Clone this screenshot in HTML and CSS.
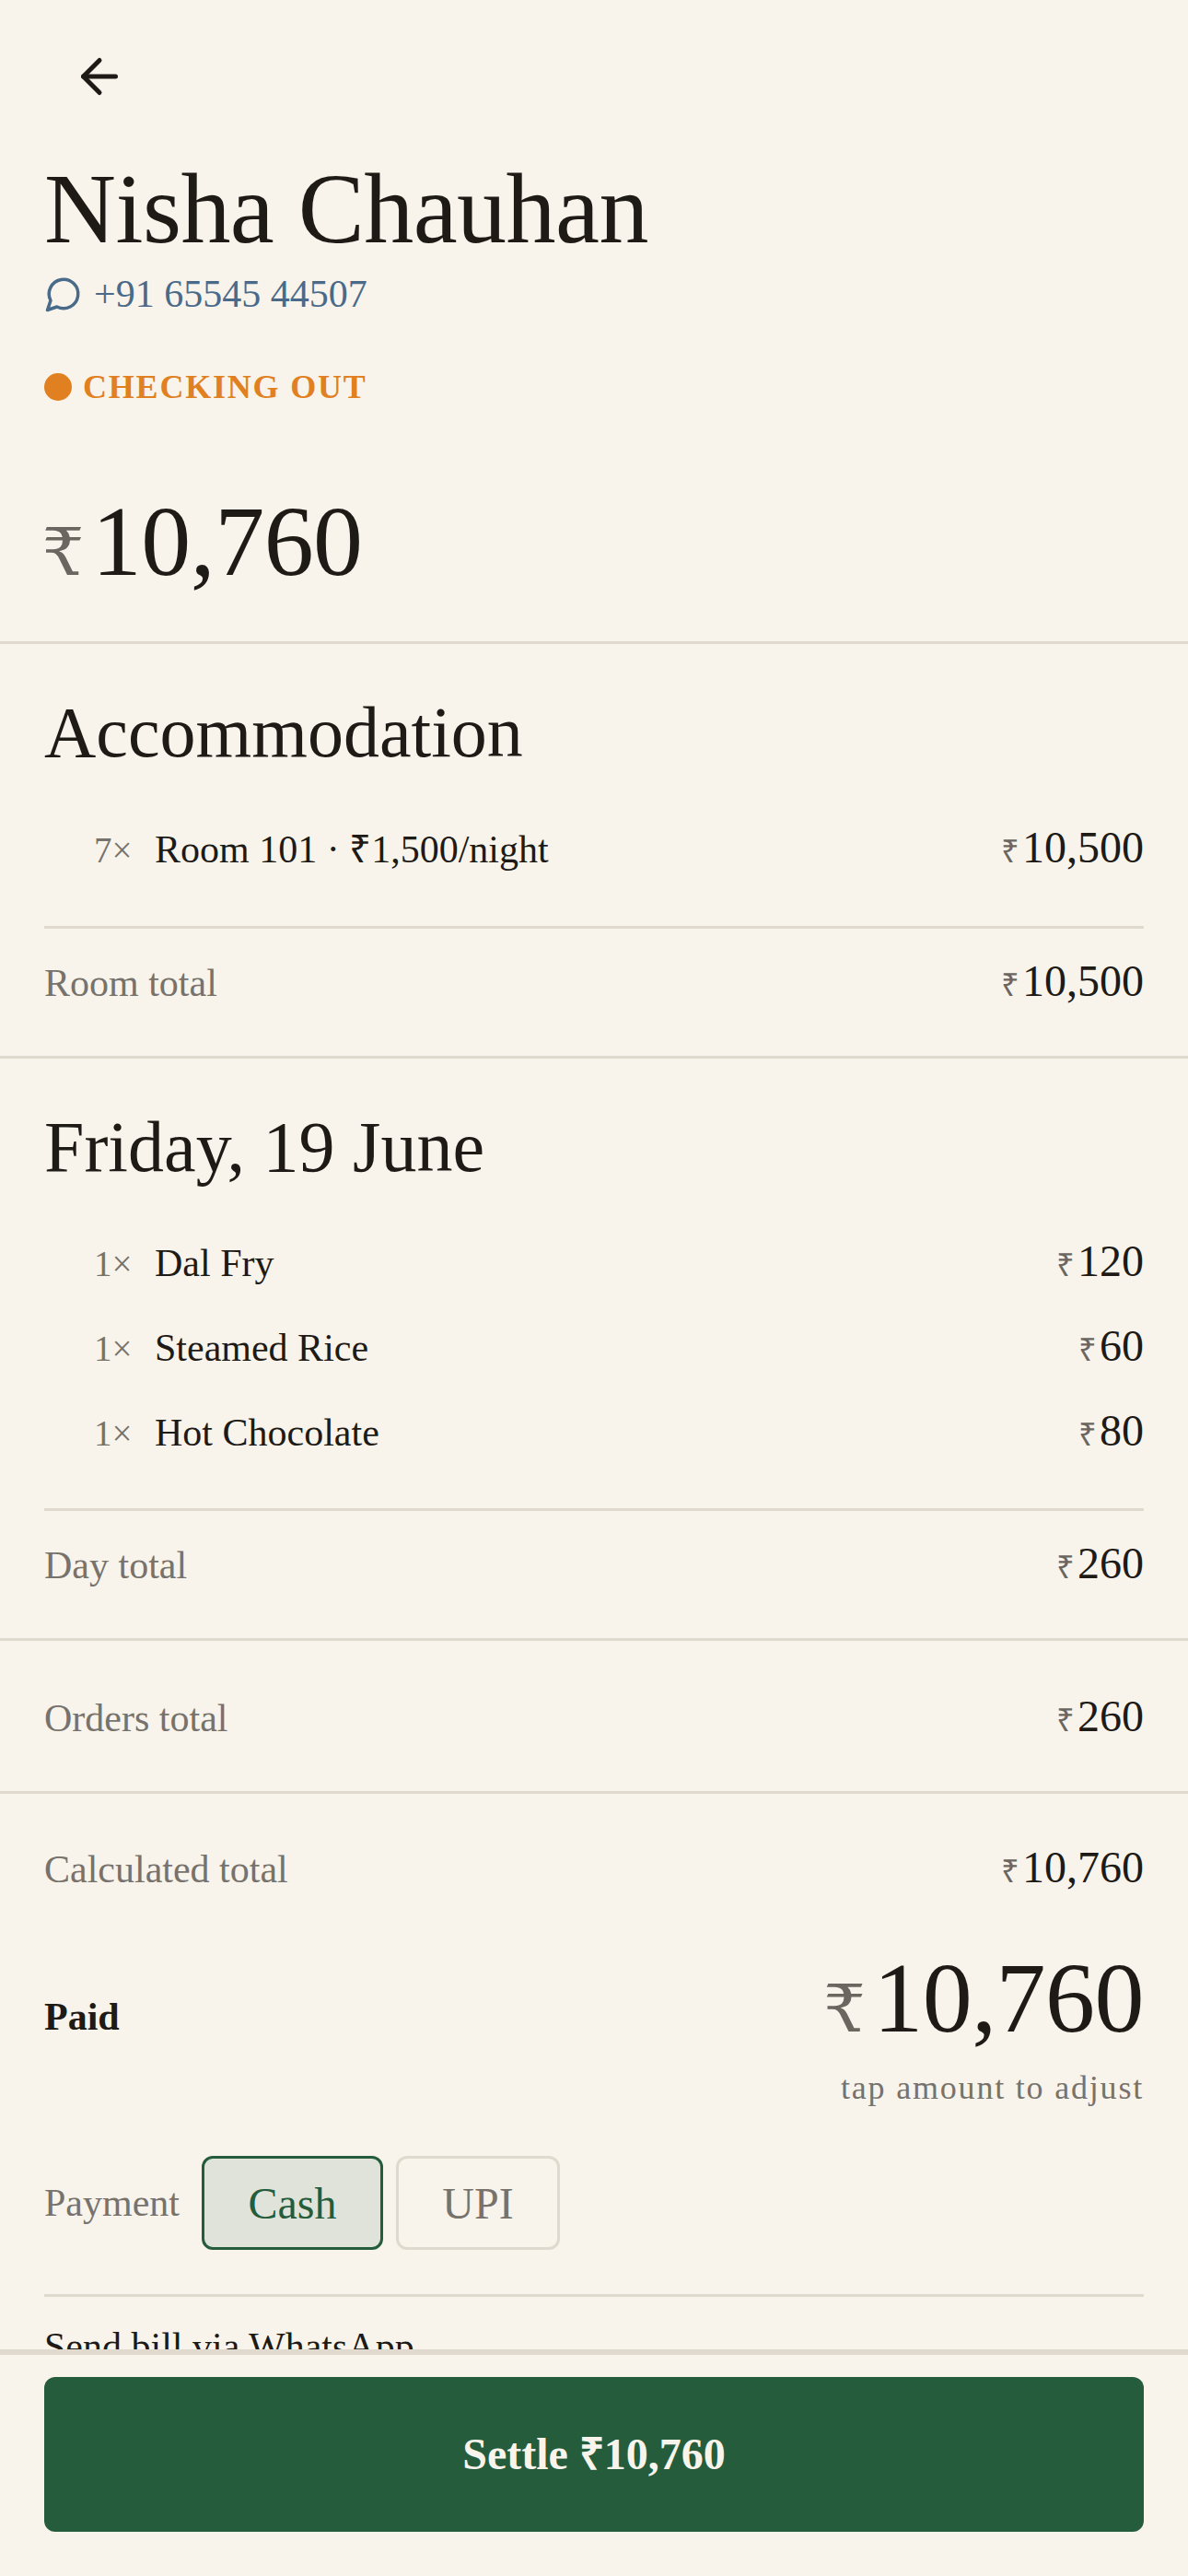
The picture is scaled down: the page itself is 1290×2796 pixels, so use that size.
FILE: index.html
```html
<!DOCTYPE html>
<html lang="en">
<head>
  <meta charset="UTF-8" />
  <meta name="viewport" content="width=device-width, initial-scale=1.0" />
  <title>Nisha Chauhan</title>
  <link rel="stylesheet" href="styles.css">
</head>
<body>
  <div class="screen">
    <div class="scroll">
      <!-- Guest header -->
      <header class="guest">
        <button class="back" aria-label="Back">
          <svg width="60" height="60" viewBox="0 0 24 24" fill="none" stroke="currentColor" stroke-width="2" stroke-linecap="round" stroke-linejoin="round">
            <path d="M19 12H5" />
            <path d="M12 19l-7-7 7-7" />
          </svg>
        </button>
        <h1 class="guest-name">Nisha Chauhan</h1>
        <a class="phone">
          <svg width="42" height="42" viewBox="0 0 24 24" fill="none" stroke="currentColor" stroke-width="2" stroke-linecap="round" stroke-linejoin="round">
            <path d="M7.9 20A9 9 0 1 0 4 16.1L2 22Z" />
          </svg>
          <span>+91 65545 44507</span>
        </a>
        <div class="status"><span class="dot"></span>CHECKING OUT</div>
        <div class="grand"><span class="rs">₹</span>10,760</div>
      </header>

      <!-- Room charges -->
      <section class="block">
        <h2>Accommodation</h2>
        <div class="item">
          <span class="qty">7×</span>
          <span class="item-name">Room 101 · ₹1,500/night</span>
          <span class="amt"><span class="rs">₹</span>10,500</span>
        </div>
        <div class="subtotal">
          <span class="label">Room total</span>
          <span class="amt"><span class="rs">₹</span>10,500</span>
        </div>
      </section>

      <!-- Orders by day -->
      <section class="block">
        <h2>Friday, 19 June</h2>
        <div class="item">
          <span class="qty">1×</span>
          <span class="item-name">Dal Fry</span>
          <span class="amt"><span class="rs">₹</span>120</span>
        </div>
        <div class="item">
          <span class="qty">1×</span>
          <span class="item-name">Steamed Rice</span>
          <span class="amt"><span class="rs">₹</span>60</span>
        </div>
        <div class="item">
          <span class="qty">1×</span>
          <span class="item-name">Hot Chocolate</span>
          <span class="amt"><span class="rs">₹</span>80</span>
        </div>
        <div class="subtotal">
          <span class="label">Day total</span>
          <span class="amt"><span class="rs">₹</span>260</span>
        </div>
      </section>

      <section class="orders">
        <span class="label">Orders total</span>
        <span class="amt"><span class="rs">₹</span>260</span>
      </section>

      <!-- Settlement -->
      <section class="settle">
        <div class="calc">
          <span class="label">Calculated total</span>
          <span class="amt"><span class="rs">₹</span>10,760</span>
        </div>
        <div class="paid">
          <span class="paid-label">Paid</span>
          <div class="paid-right">
            <div class="paid-amt"><span class="rs">₹</span>10,760</div>
            <div class="hint">tap amount to adjust</div>
          </div>
        </div>
        <div class="payment">
          <span class="label">Payment</span>
          <button class="pay-btn active">Cash</button>
          <button class="pay-btn">UPI</button>
        </div>
        <div class="send">Send bill via WhatsApp</div>
      </section>
    </div>

    <footer class="footer">
      <button class="settle-btn">Settle ₹10,760</button>
    </footer>
  </div>
</body>
</html>
```

FILE: styles.css
```css
/* General styles */
* {
  box-sizing: border-box;
}
html,
body {
  margin: 0;
  height: 100%;
  overflow: hidden;
}
body {
  font-family: "Liberation Serif", serif;
  background-color: #f8f4ec;
  color: #1e1a15;
}
button {
  font-family: inherit;
  cursor: pointer;
}
.screen {
  display: flex;
  flex-direction: column;
  height: 100vh;
}
.scroll {
  flex: 1;
  min-height: 0;
  overflow: hidden;
}
.rs {
  color: #6b665f;
  font-size: 0.72em;
  margin-right: 3px;
}
.label {
  font-size: 42px;
  color: #77726b;
}
.amt {
  font-size: 48px;
}
/* Guest header */
.guest {
  padding: 53px 48px 44px;
  border-bottom: 3px solid #e0d9ce;
}
.back {
  display: block;
  width: 60px;
  height: 60px;
  margin-left: 30px;
  padding: 0;
  border: none;
  background: none;
  color: #1e1a15;
}
.guest-name {
  margin: 55px 0 0;
  font-size: 108px;
  font-weight: 400;
  line-height: 1.1;
  letter-spacing: -0.005em;
}
.phone {
  display: flex;
  align-items: center;
  gap: 12px;
  margin-top: 8px;
  font-size: 42px;
  color: #4a6a8a;
}
.status {
  display: flex;
  align-items: center;
  gap: 12px;
  margin-top: 56px;
  font-size: 36px;
  font-weight: 700;
  letter-spacing: 0.05em;
  color: #e08020;
}
.dot {
  width: 30px;
  height: 30px;
  border-radius: 50%;
  background-color: #e08020;
}
.grand {
  margin-top: 82px;
  font-size: 108px;
  line-height: 1.2;
  letter-spacing: -0.005em;
}
.grand .rs,
.paid-amt .rs {
  font-family: "DejaVu Serif", serif;
  font-size: 0.66em;
  margin-left: -2px;
  margin-right: 9px;
}
/* Bill sections */
.block {
  padding: 49px 48px 0;
  border-bottom: 3px solid #e0d9ce;
}
.block h2 {
  margin: 0 0 31px;
  font-size: 78px;
  font-weight: 400;
  line-height: 1.2;
}
.item {
  display: flex;
  align-items: baseline;
  padding: 18.5px 0 18.5px 54px;
}
.qty {
  width: 66px;
  font-size: 39px;
  color: #77726b;
}
.item-name {
  flex: 1;
  font-size: 42px;
}
.subtotal {
  display: flex;
  justify-content: space-between;
  align-items: baseline;
  margin-top: 38px;
  padding: 29px 0 54px;
  border-top: 3px solid #e0d9ce;
}
.orders {
  display: flex;
  justify-content: space-between;
  align-items: baseline;
  padding: 54px 48px;
  border-bottom: 3px solid #e0d9ce;
}
/* Settlement */
.settle {
  padding: 52px 48px 0;
}
.calc {
  display: flex;
  justify-content: space-between;
  align-items: baseline;
}
.paid {
  display: flex;
  justify-content: space-between;
  margin-top: 50px;
}
.paid-label {
  margin-top: 61px;
  font-size: 42px;
  font-weight: 700;
}
.paid-right {
  text-align: right;
}
.paid-amt {
  font-size: 108px;
  line-height: 1.2;
  letter-spacing: -0.005em;
}
.hint {
  margin-top: 12px;
  font-size: 36px;
  letter-spacing: 0.05em;
  color: #77726b;
}
.payment {
  display: flex;
  align-items: center;
  gap: 14px;
  margin-top: 53px;
  padding-bottom: 48px;
  border-bottom: 3px solid #e0d9ce;
}
.payment .label {
  margin-right: 10px;
}
.pay-btn {
  width: 178px;
  height: 102px;
  border: 3px solid #e0d9ce;
  border-radius: 12px;
  background: none;
  font-size: 48px;
  color: #77726b;
}
.pay-btn.active {
  width: 197px;
  border-color: #245c3c;
  background-color: #e0e3d9;
  color: #245c3c;
}
.send {
  margin-top: 30px;
  font-size: 42px;
}
/* Footer */
.footer {
  padding: 24px 48px 48px;
  border-top: 6px solid #e0d9ce;
  background-color: #f8f4ec;
}
.settle-btn {
  display: block;
  width: 100%;
  height: 168px;
  padding-bottom: 6px;
  border: none;
  border-radius: 12px;
  background-color: #245c3c;
  color: #f8f4ec;
  font-size: 48px;
  font-weight: 700;
}
```
